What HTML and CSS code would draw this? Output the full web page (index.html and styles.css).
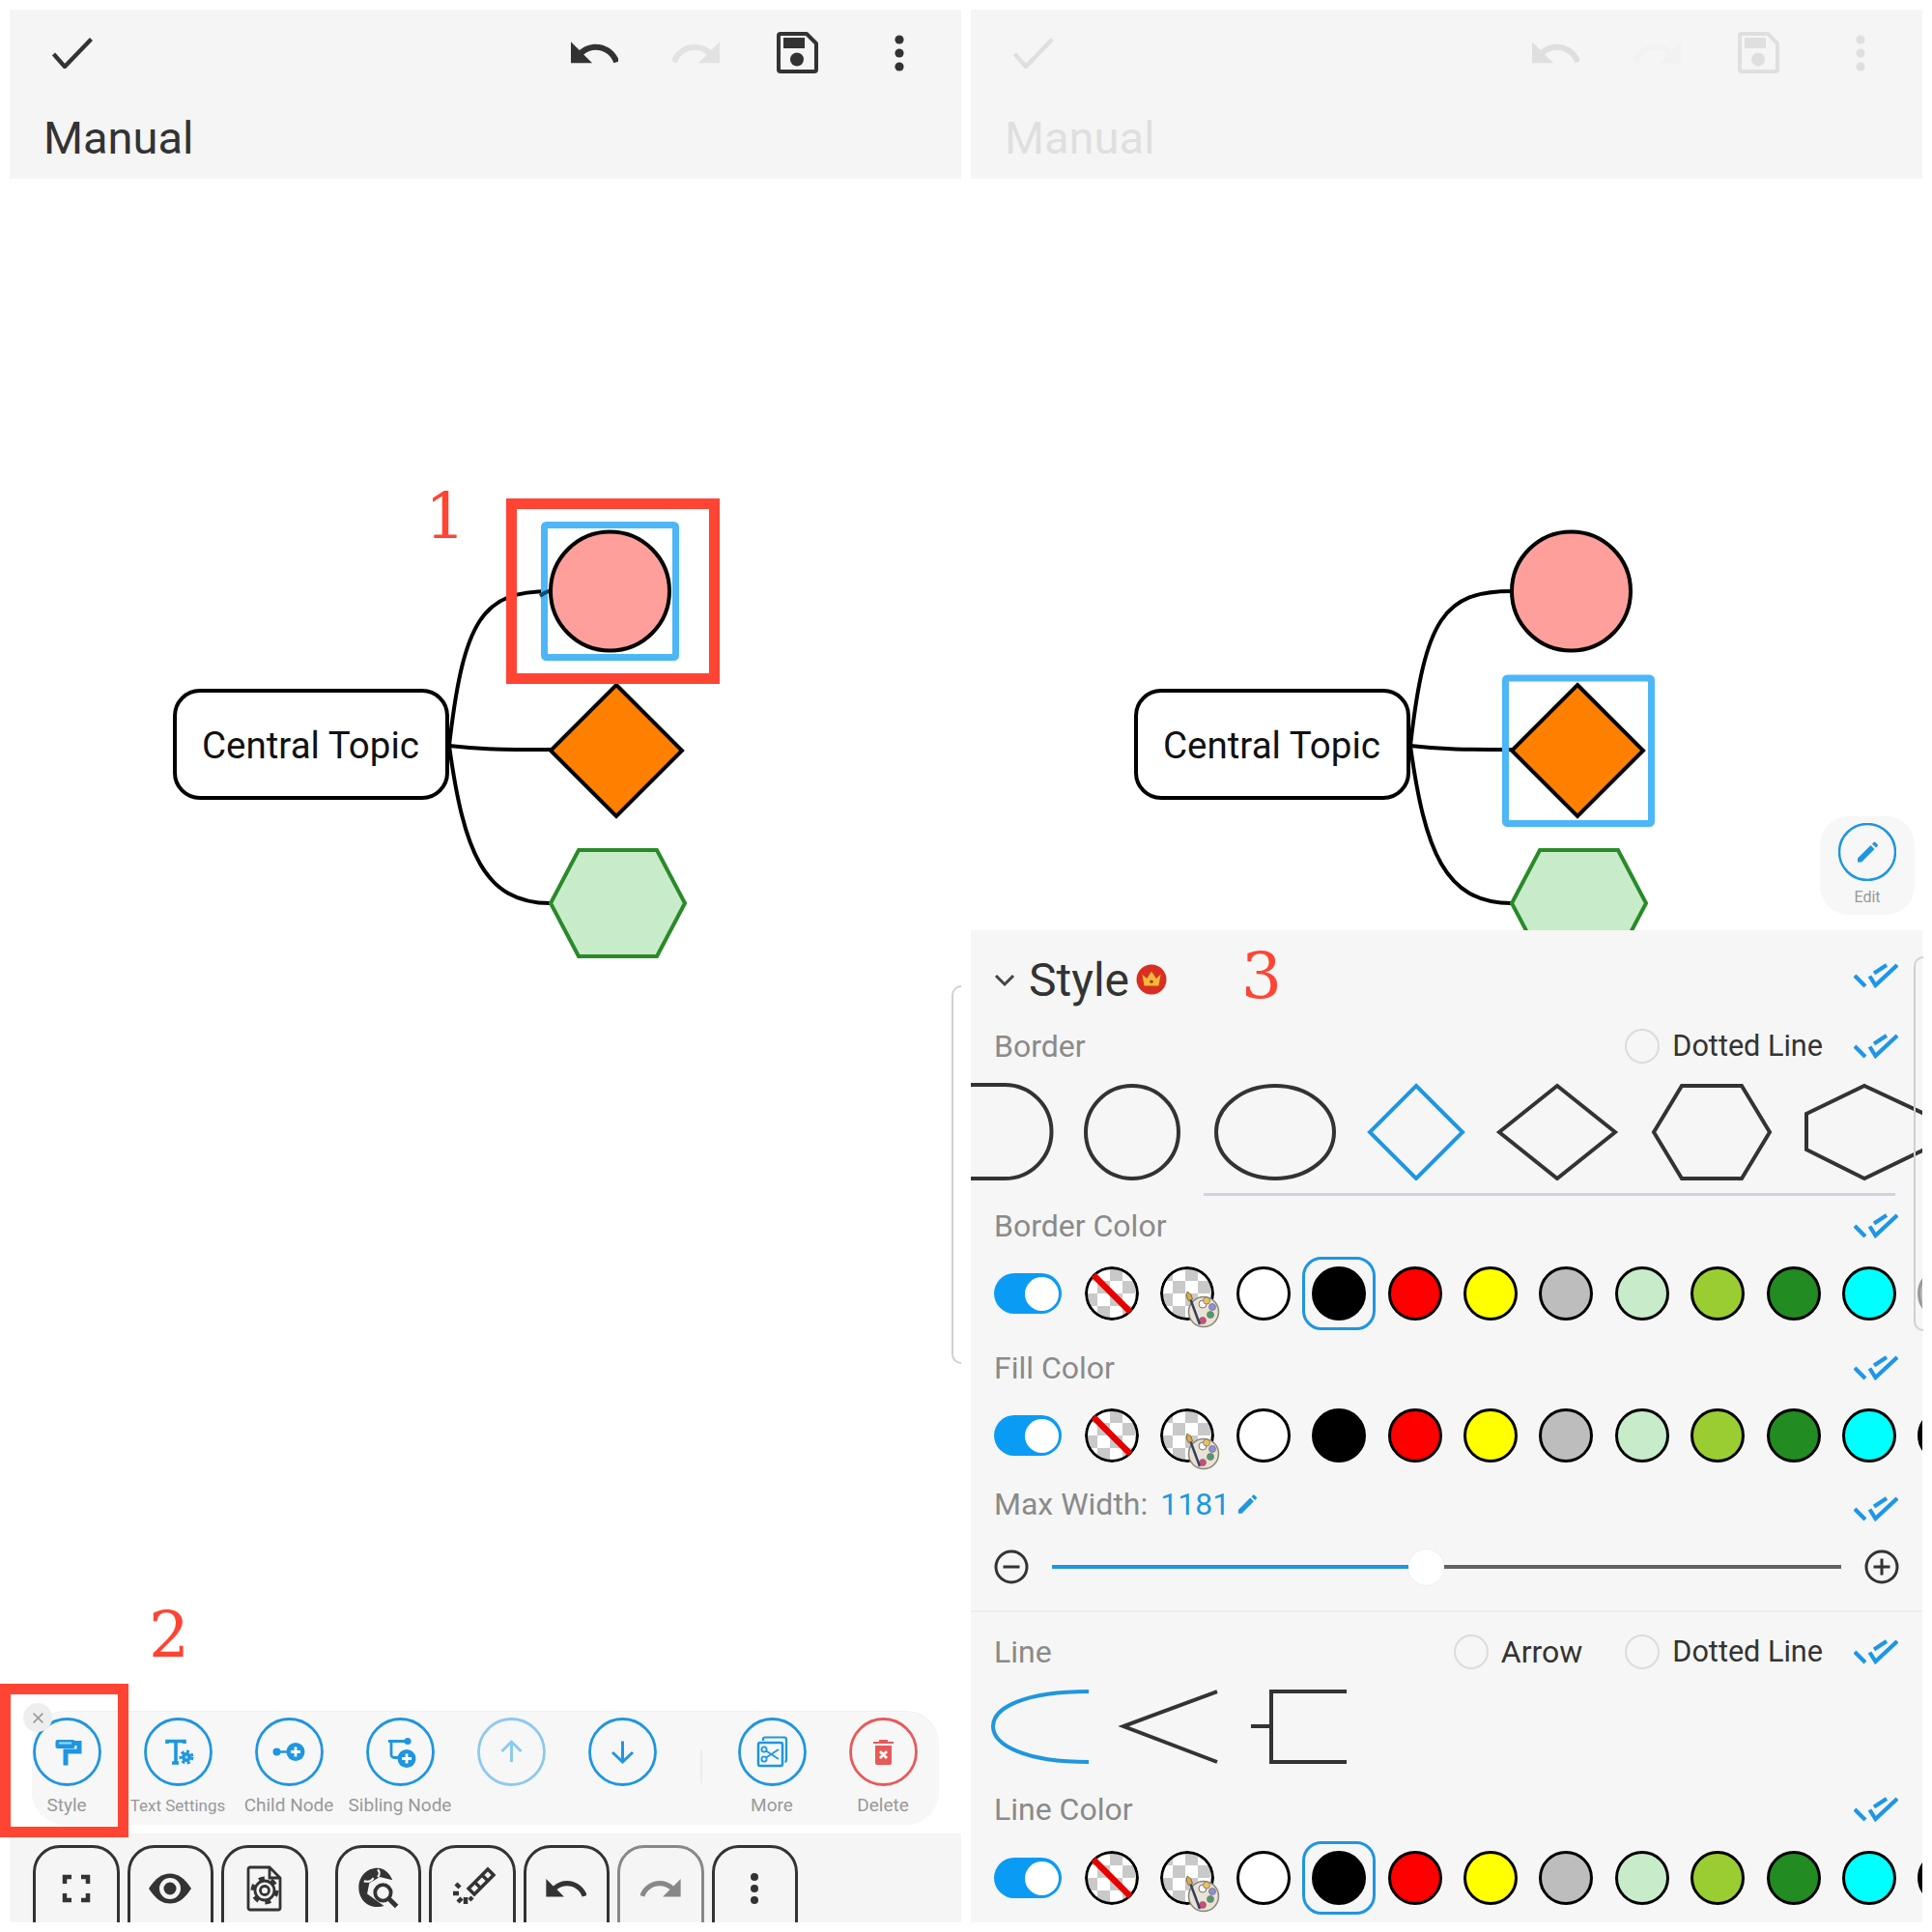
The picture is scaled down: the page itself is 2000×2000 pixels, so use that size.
FILE: index.html
```html
<!DOCTYPE html>
<html lang="en">
<head>
<meta charset="utf-8">
<title>Manual</title>
<link rel="stylesheet" href="styles.css">
</head>
<body>
<svg class="defs" width="0" height="0" aria-hidden="true">
  <defs>
    <pattern id="checker" width="26" height="26" patternUnits="userSpaceOnUse" x="0" y="2">
      <rect width="26" height="26" fill="#fff"/>
      <rect width="13" height="13" fill="#c9c9c9"/>
      <rect x="13" y="13" width="13" height="13" fill="#c9c9c9"/>
    </pattern>
    <symbol id="ic-undo" viewBox="2 7 20 9.2"><path fill="currentColor" d="M12.5 8c-2.65 0-5.05.99-6.9 2.6L2 7v9h9l-3.62-3.62c1.39-1.16 3.16-1.88 5.12-1.88 3.54 0 6.55 2.31 7.6 5.5l2.37-.78C21.08 11.03 17.15 8 12.5 8z"/></symbol>
    <symbol id="ic-redo" viewBox="2 7 20 9.2"><path fill="currentColor" d="M18.4 10.6C16.55 8.99 14.15 8 11.5 8c-4.65 0-8.58 3.03-9.96 7.22L3.9 16c1.05-3.19 4.05-5.5 7.6-5.5 1.95 0 3.73.72 5.12 1.88L13 16h9V7l-3.6 3.6z"/></symbol>
    <symbol id="ic-check" viewBox="0 0 42 32"><path fill="none" stroke="currentColor" stroke-width="4.400" d="M1.500 17 13 30 40.500 1.500"/></symbol>
    <symbol id="ic-save" viewBox="0 0 43 43">
      <path fill="none" stroke="currentColor" stroke-width="4" stroke-linejoin="round" d="M4 2h27l10 10v27a2 2 0 0 1-2 2H4a2 2 0 0 1-2-2V4a2 2 0 0 1 2-2z"/>
      <rect x="7" y="6" width="22" height="11" fill="currentColor"/>
      <circle cx="21" cy="28.500" r="7" fill="currentColor"/>
    </symbol>
    <symbol id="ic-more" viewBox="0 0 10 40">
      <circle cx="5" cy="6" r="4.600" fill="currentColor"/><circle cx="5" cy="20" r="4.600" fill="currentColor"/><circle cx="5" cy="34" r="4.600" fill="currentColor"/>
    </symbol>
    <symbol id="ic-double" viewBox="0 0 46 26">
      <path fill="none" stroke="currentColor" stroke-width="4.200" d="M1 13 12 24M16.500 13.500 22.500 23 45 2M21 10.500 34 2"/>
    </symbol>
    <symbol id="ic-pencil" viewBox="0 0 24 24">
      <path fill="currentColor" d="M2 18.500 15.500 5l4 4L6 22.500H2.500a.5.500 0 0 1-.5-.5zM17 3.500l1.500-1.500a1.400 1.400 0 0 1 2 0l2 2a1.400 1.400 0 0 1 0 2L21 7.500z"/>
    </symbol>
    <symbol id="ic-palette" viewBox="0 0 36 40">
      <ellipse cx="19" cy="23" rx="15.500" ry="15.500" fill="#e9e2d5" stroke="#8a8578" stroke-width="1.500"/>
      <circle cx="18" cy="15" r="4" fill="#fff" stroke="#777" stroke-width="1"/>
      <circle cx="22" cy="11.500" r="3.500" fill="#ecc15a" stroke="#777" stroke-width=".8"/>
      <circle cx="28" cy="18" r="3.500" fill="#8f8fd8" stroke="#777" stroke-width=".8"/>
      <circle cx="26" cy="26" r="3.500" fill="#4f9a6c" stroke="#777" stroke-width=".8"/>
      <circle cx="18" cy="32" r="3.500" fill="#d6487a" stroke="#777" stroke-width=".8"/>
      <path fill="none" stroke="#34405e" stroke-width="2.500" d="M5 9 15 36"/>
      <path fill="#d6a94f" stroke="#6b5a32" stroke-width=".8" d="M2 2 6 5 7.500 10 3.500 11.500 1 7z"/>
    </symbol>
  </defs>
</svg>

<div class="page">
  <section class="phone">
    <header class="app-head">
      <div class="head-row">
        <svg class="hi hi-check"><use href="#ic-check"/></svg>
        <span class="spring"></span>
        <svg class="hi hi-undo"><use href="#ic-undo"/></svg>
        <svg class="hi hi-redo dim"><use href="#ic-redo"/></svg>
        <svg class="hi hi-save"><use href="#ic-save"/></svg>
        <svg class="hi hi-more"><use href="#ic-more"/></svg>
      </div>
      <h1 class="head-title">Manual</h1>
    </header>

    <div class="canvas">
      <svg class="diagram" viewBox="10 185 985 1587" width="985" height="1587">
        <g class="links">
          <path d="M465 772C480 640 500 612 570 612"/>
          <path d="M465 772C500 776 520 776 570 776"/>
          <path d="M465 772C480 880 500 935 570 935"/>
        </g>
        <rect class="sel" x="563.500" y="543.500" width="136" height="137" rx="2"/>
        <path class="connect-over" d="M559 617C562 615 565 612 570 612"/>
        <ellipse class="n-circle" cx="631.500" cy="612" rx="61.500" ry="61.500"/>
        <polygon class="n-diamond" points="638,709 706,777 638,845 570,777"/>
        <polygon class="n-hex" points="599,880 680,880 709,935 680,990 599,990 570,935"/>
        <rect class="n-root" x="181" y="715" width="282" height="111" rx="26"/>
        <text class="n-text" x="321.500" y="785">Central Topic</text>
      </svg>
    </div>

    <div class="strip">
      <div class="act"><svg class="act-ic"><circle class="ring" cx="35.500" cy="35.500" r="34"/>
        <path class="blue-fill" d="M23.500 25a2 2 0 0 1 2-2h16a2 2 0 0 1 2 2v5a2 2 0 0 1-2 2h-16a2 2 0 0 1-2-2z"/>
        <path class="blue-line" d="M43 26.500h5v8.500H34v14.500" stroke-width="5"/>
        <path class="pale" d="M27 25.500h13v2H27z"/></svg><span class="act-label">Style</span></div>
      <div class="act"><svg class="act-ic"><circle class="ring" cx="35.500" cy="35.500" r="34"/>
        <path class="blue-line" d="M24 27v-2.500h18V27M33 24.500V47M29 47h7" stroke-width="3.600"/>
        <circle class="gear" cx="44" cy="41" r="6"/><circle class="blue-fill" cx="44" cy="41" r="5"/><circle class="pale" cx="44" cy="41" r="1.600"/></svg><span class="act-label small">Text Settings</span></div>
      <div class="act"><svg class="act-ic"><circle class="ring" cx="35.500" cy="35.500" r="34"/>
        <circle class="blue-fill" cx="22.500" cy="35.500" r="4"/><path class="blue-line" d="M22 35.500h14" stroke-width="2.500"/>
        <circle class="blue-fill" cx="42" cy="35.500" r="9.500"/><path class="plus" d="M42 30.500v10M37 35.500h10"/></svg><span class="act-label">Child Node</span></div>
      <div class="act"><svg class="act-ic"><circle class="ring" cx="35.500" cy="35.500" r="34"/>
        <path class="blue-line" d="M23 24.500h20M26 24.500v14a3 3 0 0 0 3 3h6" stroke-width="2.800"/><circle class="blue-fill" cx="43" cy="24.500" r="3.600"/>
        <circle class="blue-fill" cx="42" cy="42.500" r="9.500"/><path class="plus" d="M42 37.500v10M37 42.500h10"/></svg><span class="act-label">Sibling Node</span></div>
      <div class="act act-off"><svg class="act-ic"><circle class="ring" cx="35.500" cy="35.500" r="34"/>
        <path class="blue-line" d="M35.500 46V25M25.500 35l10-10 10 10" stroke-width="3"/></svg></div>
      <div class="act"><svg class="act-ic"><circle class="ring" cx="35.500" cy="35.500" r="34"/>
        <path class="blue-line" d="M35.500 24.500V46M25 36l10.500 10L46 36" stroke-width="3"/></svg></div>
      <span class="strip-sep"></span>
      <div class="act"><svg class="act-ic"><circle class="ring" cx="35.500" cy="35.500" r="34"/>
        <path class="blue-line" d="M26 24v-1.500a2 2 0 0 1 2-2h20a2 2 0 0 1 2 2V44a2 2 0 0 1-1.500 2" stroke-width="2.200"/>
        <rect class="blue-line" x="21" y="26" width="25" height="24" rx="2" stroke-width="2.500"/>
        <circle class="blue-line" cx="27" cy="33" r="2.600" stroke-width="1.800"/><circle class="blue-line" cx="27" cy="43" r="2.600" stroke-width="1.800"/>
        <path class="blue-line" d="M29 34.500 42 43M29 41.500 42 33" stroke-width="1.800"/></svg><span class="act-label">More</span></div>
      <div class="act act-red"><svg class="act-ic"><circle class="ring" cx="35.500" cy="35.500" r="34"/>
        <path class="blue-fill" d="M27 29h17v18a2 2 0 0 1-2 2H29a2 2 0 0 1-2-2zM25 25h21v2H25zM31 23h9v2h-9z"/>
        <path class="plus" d="M32 35l7 7M39 35l-7 7"/></svg><span class="act-label">Delete</span></div>
    </div>

    <nav class="bottom-bar">
      <div class="tool"><svg class="ti" viewBox="0 0 48 48"><path class="ti-line" d="M12 19v-7h7M29 12h7v7M36 29v7h-7M19 36h-7v-7"/></svg></div>
      <div class="tool"><svg class="ti" viewBox="0 0 48 48"><path class="ti-fill" d="M2 24C9 13 16 8.500 24 8.500S39 13 46 24C39 35 32 39.500 24 39.500S9 35 2 24z"/><circle class="ti-hole" cx="24" cy="24" r="11"/><circle class="ti-fill" cx="24" cy="24" r="6.500"/></svg></div>
      <div class="tool"><svg class="ti" viewBox="0 0 48 48"><path class="ti-thin" d="M9 2h20l11 11v31a2 2 0 0 1-2 2H9a2 2 0 0 1-2-2V4a2 2 0 0 1 2-2zM29 2v11h11"/><circle class="ti-thin" cx="24" cy="26" r="4.500"/><circle class="ti-thin" cx="24" cy="26" r="10"/><circle class="ti-teeth" cx="24" cy="26" r="12.500"/></svg></div>
      <div class="tool tool-gap"><svg class="ti" viewBox="2 2 44 44"><path class="ti-fill" d="M24 4.500C13 4.500 6 13 6 23s7 18.500 18 18.500c2 0 4-.3 6-1L14 29l2-10 10-6 12 3C35 9 30 4.500 24 4.500z"/><path class="ti-hole-line" d="M11 17c4 1 7 0 9-3M24 6c2 2 2 5 0 7"/><circle class="ti-thin-b" cx="29" cy="28" r="7.500"/><path class="ti-thick" d="M35 34l7 7"/></svg></div>
      <div class="tool"><svg class="ti" viewBox="0 0 48 48"><path class="ti-thin ti-bold" d="M40 4l6 6-20 20-6-6zM34 10l6 6M26 17l6 6"/><path class="ti-thick" d="M4 29h6M7 19l4 4M17 33v7M9 38l4-4M24 36l-3-3"/></svg></div>
      <div class="tool"><svg class="ti-wide"><use href="#ic-undo"/></svg></div>
      <div class="tool tool-off"><svg class="ti-wide"><use href="#ic-redo"/></svg></div>
      <div class="tool"><svg class="ti" viewBox="0 0 48 48"><circle class="ti-fill" cx="24" cy="12" r="4"/><circle class="ti-fill" cx="24" cy="24" r="4"/><circle class="ti-fill" cx="24" cy="36" r="4"/></svg></div>
    </nav>
  </section>

  <section class="phone">
    <header class="app-head">
      <div class="head-row faded">
        <svg class="hi hi-check"><use href="#ic-check"/></svg>
        <span class="spring"></span>
        <svg class="hi hi-undo"><use href="#ic-undo"/></svg>
        <svg class="hi hi-redo dim"><use href="#ic-redo"/></svg>
        <svg class="hi hi-save"><use href="#ic-save"/></svg>
        <svg class="hi hi-more"><use href="#ic-more"/></svg>
      </div>
      <h2 class="head-title faded">Manual</h2>
    </header>

    <div class="canvas">
      <svg class="diagram" viewBox="1005 185 985 778" width="985" height="778">
        <g class="links">
          <path d="M1460 772C1475 640 1495 612 1565 612"/>
          <path d="M1460 772C1495 776 1515 776 1565 776"/>
          <path d="M1460 772C1475 880 1495 935 1565 935"/>
        </g>
        <ellipse class="n-circle" cx="1626.500" cy="612" rx="61.500" ry="61.500"/>
        <rect class="sel" x="1558.500" y="702" width="151" height="150.500" rx="2"/>
        <polygon class="n-diamond" points="1633,709 1701,777 1633,845 1565,777"/>
        <polygon class="n-hex" points="1594,880 1675,880 1704,935 1675,990 1594,990 1565,935"/>
        <rect class="n-root" x="1176" y="715" width="282" height="111" rx="26"/>
        <text class="n-text" x="1316.500" y="785">Central Topic</text>
      </svg>
      <div class="edit-chip">
        <svg class="edit-ring" viewBox="0 0 60 60"><circle class="ring" cx="30" cy="30" r="29"/><use href="#ic-pencil" x="18" y="18" width="24" height="24" class="blue-ink"/></svg>
        <span class="edit-label">Edit</span>
      </div>
    </div>

    <div class="panel">
      <div class="row row-title">
        <svg class="chev" viewBox="0 0 22 14"><path d="M2 2l9 9 9-9"/></svg>
        <span class="panel-title">Style</span>
        <svg class="crown" viewBox="0 0 30 30"><circle cx="15" cy="15" r="14.500" fill="#d92f22"/><path fill="#f4b93b" d="M6 10l4.500 4L15 7l4.500 7L24 10l-2 11H8z"/><circle cx="15" cy="17" r="1.600" fill="#b5281c"/></svg>
        <span class="spring"></span>
        <svg class="dbl dbl-up"><use href="#ic-double"/></svg>
      </div>

      <div class="row row-label">
        <span class="label">Border</span>
        <span class="spring"></span>
        <span class="radio"></span><span class="opt">Dotted Line</span>
        <svg class="dbl"><use href="#ic-double"/></svg>
      </div>

      <svg class="shapes" viewBox="1005 1121 985 101" width="985" height="101">
        <path d="M1000 1123h40a48 48 0 0 1 0 97h-40"/>
        <circle cx="1172" cy="1172" r="48"/>
        <ellipse cx="1320" cy="1172" rx="61" ry="48"/>
        <polygon class="on" points="1466,1124 1514,1172 1466,1220 1418,1172"/>
        <polygon points="1612,1124 1672,1172 1612,1220 1552,1172"/>
        <polygon points="1741,1124 1803,1124 1832,1172 1803,1220 1741,1220 1712,1172"/>
        <polygon points="1930,1124 1992,1153 1992,1190 1930,1220 1870,1190 1870,1153"/>
      </svg>
      <div class="scrollbar"></div>

      <div class="row row-label row-bc">
        <span class="label">Border Color</span>
        <span class="spring"></span>
        <svg class="dbl"><use href="#ic-double"/></svg>
      </div>
      <div class="swatches">
        <span class="toggle"><i></i></span>
        <svg class="sw" viewBox="0 0 56 56"><circle cx="28" cy="28" r="26.500" fill="url(#checker)" stroke="#000" stroke-width="3"/><path stroke="#e60000" stroke-width="6.500" d="M9 9l38 38"/></svg>
        <span class="sw-wrap"><svg class="sw" viewBox="0 0 56 56"><circle cx="28" cy="28" r="26.500" fill="url(#checker)" stroke="#000" stroke-width="3"/></svg><svg class="palette"><use href="#ic-palette"/></svg></span>
        <span class="sw c-white"></span>
        <span class="sw-picked"><span class="sw c-black"></span></span>
        <span class="sw c-red"></span><span class="sw c-yellow"></span><span class="sw c-gray"></span><span class="sw c-mint"></span><span class="sw c-lime"></span><span class="sw c-green"></span><span class="sw c-cyan"></span><span class="sw c-silver"></span>
      </div>

      <div class="row row-label row-fc">
        <span class="label">Fill Color</span>
        <span class="spring"></span>
        <svg class="dbl"><use href="#ic-double"/></svg>
      </div>
      <div class="swatches">
        <span class="toggle"><i></i></span>
        <svg class="sw" viewBox="0 0 56 56"><circle cx="28" cy="28" r="26.500" fill="url(#checker)" stroke="#000" stroke-width="3"/><path stroke="#e60000" stroke-width="6.500" d="M9 9l38 38"/></svg>
        <span class="sw-wrap"><svg class="sw" viewBox="0 0 56 56"><circle cx="28" cy="28" r="26.500" fill="url(#checker)" stroke="#000" stroke-width="3"/></svg><svg class="palette"><use href="#ic-palette"/></svg></span>
        <span class="sw c-white"></span>
        <span class="sw-picked off"><span class="sw c-black"></span></span>
        <span class="sw c-red"></span><span class="sw c-yellow"></span><span class="sw c-gray"></span><span class="sw c-mint"></span><span class="sw c-lime"></span><span class="sw c-green"></span><span class="sw c-cyan"></span><span class="sw c-black"></span>
      </div>

      <div class="row row-label row-mw">
        <span class="label">Max Width:</span>
        <span class="mw-value">1181</span>
        <svg class="mw-pen blue-ink"><use href="#ic-pencil"/></svg>
        <span class="spring"></span>
        <svg class="dbl dbl-down"><use href="#ic-double"/></svg>
      </div>
      <div class="slider">
        <svg class="step" viewBox="0 0 36 36"><circle cx="18" cy="18" r="16"/><path d="M9.500 18h17"/></svg>
        <span class="track-on"></span><span class="thumb"></span><span class="track-off"></span>
        <svg class="step" viewBox="0 0 36 36"><circle cx="18" cy="18" r="16"/><path d="M9.500 18h17M18 9.500v17"/></svg>
      </div>
      <div class="rule"></div>

      <div class="row row-label row-line">
        <span class="label">Line</span>
        <span class="spring"></span>
        <span class="radio"></span><span class="opt opt-arrow">Arrow</span>
        <span class="radio"></span><span class="opt">Dotted Line</span>
        <svg class="dbl"><use href="#ic-double"/></svg>
      </div>
      <svg class="lines" viewBox="1005 1749 985 78" width="985" height="78">
        <path class="on" d="M1127 1751C1060 1751 1028 1768 1028 1787S1060 1824 1127 1824"/>
        <path d="M1260 1751 1163 1787 1260 1824"/>
        <path d="M1394 1751H1316V1824H1394M1295 1787H1316"/>
      </svg>

      <div class="row row-label row-lc">
        <span class="label">Line Color</span>
        <span class="spring"></span>
        <svg class="dbl"><use href="#ic-double"/></svg>
      </div>
      <div class="swatches swatches-last">
        <span class="toggle"><i></i></span>
        <svg class="sw" viewBox="0 0 56 56"><circle cx="28" cy="28" r="26.500" fill="url(#checker)" stroke="#000" stroke-width="3"/><path stroke="#e60000" stroke-width="6.500" d="M9 9l38 38"/></svg>
        <span class="sw-wrap"><svg class="sw" viewBox="0 0 56 56"><circle cx="28" cy="28" r="26.500" fill="url(#checker)" stroke="#000" stroke-width="3"/></svg><svg class="palette"><use href="#ic-palette"/></svg></span>
        <span class="sw c-white"></span>
        <span class="sw-picked"><span class="sw c-black"></span></span>
        <span class="sw c-red"></span><span class="sw c-yellow"></span><span class="sw c-gray"></span><span class="sw c-mint"></span><span class="sw c-lime"></span><span class="sw c-green"></span><span class="sw c-cyan"></span><span class="sw c-black"></span>
      </div>
    </div>
  </section>

  <div class="mark mark-1"></div>
  <div class="mark mark-2"></div>
  <div class="ghost ghost-l"></div>
  <div class="ghost ghost-r"></div>
  <button class="close-x" type="button"><svg viewBox="0 0 16 16"><path d="M2 2l12 12M14 2 2 14"/></svg></button>
  <span class="num num-1">1</span>
  <span class="num num-2">2</span>
  <span class="num num-3">3</span>
</div>
</body>
</html>
```

FILE: styles.css
```css
* { box-sizing: border-box; }
html, body { margin: 0; padding: 0; background: #fff; }
body { font-family: Roboto, "Liberation Sans", sans-serif; color: #333; }
.defs { position: absolute; }
.page { position: relative; display: flex; gap: 10px; width: 2000px; height: 2000px; padding: 10px; overflow: hidden; }
.phone { display: flex; flex-direction: column; width: 985px; height: 1980px; overflow: hidden; }
.spring { flex: 1; }

/* header */
.app-head { flex: none; height: 175px; background: #f5f5f5; }
.head-row { display: flex; align-items: center; height: 89px; padding-left: 44px; color: #333; }
.head-title { margin: 0; padding: 17px 0 0 35px; font-size: 47px; line-height: 54px; font-weight: 400; color: #333; }
.faded { opacity: .11; }
.hi { display: block; flex: none; }
.hi-check { width: 42px; height: 32px; }
.hi-undo, .hi-redo { width: 49px; height: 23px; }
.hi-redo { margin-left: 56px; }
.dim { color: #e2e2e2; }
.hi-save { width: 43px; height: 43px; margin-left: 59px; }
.hi-more { width: 10px; height: 40px; margin-left: 79px; margin-right: 59px; }

/* canvas */
.canvas { position: relative; flex: 1; min-height: 0; overflow: hidden; background: #fff; }
.diagram { display: block; }
.links path { fill: none; stroke: #000; stroke-width: 4; }
.sel { fill: none; stroke: #4db6f7; stroke-width: 7; }
.connect-over { fill: none; stroke: #0b4a70; stroke-width: 4; }
.n-circle { fill: #ff9f9c; stroke: #000; stroke-width: 4; }
.n-diamond { fill: #ff8000; stroke: #000; stroke-width: 4; stroke-linejoin: miter; }
.n-hex { fill: #c8ecca; stroke: #2a8a2a; stroke-width: 4; }
.n-root { fill: #fff; stroke: #000; stroke-width: 4; }
.n-text { font-family: Roboto, sans-serif; font-size: 38.500px; text-anchor: middle; fill: #111; }

/* edit chip */
.edit-chip { position: absolute; left: 879px; top: 660px; display: flex; flex-direction: column; align-items: center; width: 98px; height: 102px; padding-top: 7px; border-radius: 30px; background: #f7f7f7; }
.edit-ring { display: block; width: 60px; height: 60px; }
.edit-ring .ring { fill: none; stroke: #1e96e0; stroke-width: 2.500; }
.blue-ink { color: #1e96e0; }
.edit-label { margin-top: 8px; font-size: 16px; line-height: 18px; color: #999; }

/* action strip */
.strip { position: relative; flex: none; display: flex; gap: 41px; width: 939px; height: 117px; margin: 0 0 9px 23px; padding-top: 6px; border-radius: 34px; background: #f7f7f7; box-shadow: 0 -1px 0 #efefef; color: #1e96e0; }
.act { display: flex; flex-direction: column; align-items: center; flex: none; width: 74px; color: #1e96e0; }
.act:first-child { margin-left: -1px; }
.act-ic { display: block; width: 71px; height: 71px; flex: none; }
.ring { fill: none; stroke: currentColor; stroke-width: 2.800; }
.blue-fill { fill: currentColor; }
.blue-line { fill: none; stroke: currentColor; }
.pale { fill: #a8d8f5; }
.plus { fill: none; stroke: #fff; stroke-width: 2.800; }
.gear { fill: none; stroke: currentColor; stroke-width: 3; stroke-dasharray: 3 2.500; transform-box: fill-box; }
.act-label { margin-top: 8px; font-size: 19px; line-height: 24px; color: #999; white-space: nowrap; }
.act-label.small { font-size: 17px; }
.act-off { color: #8ccaf0; }
.act-red { color: #e85a5a; }
.strip-sep { flex: none; width: 2px; height: 34px; margin: 34px -6px 0 3px; background: #ececec; }

/* bottom toolbar */
.bottom-bar { flex: none; display: flex; gap: 8px; height: 92px; padding: 12px 0 0 24px; background: #f5f5f5; overflow: hidden; }
.tool { flex: none; display: flex; justify-content: center; align-items: flex-start; width: 89.500px; height: 110px; padding-top: 18px; border: 3px solid #333; border-radius: 28px; color: #333; }
.tool-gap { margin-left: 20px; }
.tool-off { border-color: #888; color: #888; }
.ti { display: block; width: 48px; height: 48px; }
.ti-wide { display: block; width: 42px; height: 19px; margin-top: 14px; }
.ti-line { fill: none; stroke: #333; stroke-width: 4.500; }
.ti-fill { fill: #333; }
.ti-hole { fill: #f5f5f5; }
.ti-thin { fill: none; stroke: #333; stroke-width: 2.800; }
.ti-bold { stroke-width: 3.400; }
.ti-teeth { fill: none; stroke: #333; stroke-width: 4; stroke-dasharray: 6 7.100; }
.ti-hole-line { fill: none; stroke: #f5f5f5; stroke-width: 2; }
.ti-thin-b { fill: #f5f5f5; stroke: #333; stroke-width: 3.500; }
.ti-thick { fill: none; stroke: #333; stroke-width: 4.500; }

/* style panel */
.panel { flex: none; display: flex; flex-direction: column; height: 1027px; background: #f6f6f6; box-shadow: 0 -1px 0 #efefef; overflow: hidden; }
.row { flex: none; display: flex; align-items: center; padding: 0 25px 0 24px; }
.row-title { height: 104px; }
.chev { width: 22px; height: 14px; margin-right: 14px; margin-left: 0; }
.chev path { fill: none; stroke: #444; stroke-width: 3; }
.panel-title { font-size: 48px; line-height: 56px; color: #333; }
.crown { width: 32px; height: 32px; margin-left: 7px; margin-top: -2px; }
.dbl { display: block; flex: none; width: 46px; height: 26px; color: #1e96e8; }
.dbl-up { margin-top: -10px; }
.dbl-down { margin-top: 10px; }
.row-label { height: 32px; font-size: 32px; line-height: 32px; }
.label { color: #8a8a8a; }
.radio { flex: none; width: 36px; height: 36px; border: 2px solid #dcdcdc; border-radius: 50%; }
.opt { margin: 0 32px 0 13px; font-size: 30.600px; color: #333; }
.opt-arrow { margin-right: 44px; font-size: 32px; }
.shapes { flex: none; display: block; margin-top: 22px; }
.shapes > *, .lines path { fill: none; stroke: #333; stroke-width: 4; }
.shapes .on, .lines .on { stroke: #1e96e0; }
.scrollbar { flex: none; width: 716px; height: 3px; margin: 13px 0 0 241px; background: #d3d1e6; }
.row-bc { margin-top: 15px; }
.row-fc { margin-top: 23px; }
.row-mw { margin-top: 17px; }
.row-line { margin-top: 25px; }
.row-lc { margin-top: 30px; }

.swatches { flex: none; display: flex; align-items: center; gap: 22.400px; width: 1020px; height: 76px; margin-top: 16px; padding-left: 24px; }
.swatches-last { margin-top: 17px; }
.toggle { flex: none; display: flex; align-items: center; justify-content: flex-end; width: 70px; height: 42px; margin-right: 1.600px; padding-right: 3px; border-radius: 21px; background: #0a9bf5; }
.toggle i { display: block; width: 35px; height: 35px; border-radius: 50%; background: #fff; }
.sw { display: block; flex: none; width: 56px; height: 56px; border: 3px solid #000; border-radius: 50%; }
svg.sw { border: 0; }
.sw-wrap { position: relative; flex: none; width: 56px; height: 56px; }
.palette { position: absolute; left: 26px; top: 24px; width: 36px; height: 40px; }
.sw-picked { flex: none; display: flex; align-items: center; justify-content: center; width: 76px; height: 76px; margin: 0 -10px; border: 3px solid #1e96e0; border-radius: 20px; }
.sw-picked.off { border-color: transparent; }
.c-white { background: #fff; }
.c-black { background: #000; }
.c-red { background: #ff0000; }
.c-yellow { background: #ffff00; }
.c-gray { background: #bdbdbd; }
.c-silver { background: #bdbdbd; border-color: #999; }
.c-mint { background: #c8ecca; }
.c-lime { background: #9acd32; }
.c-green { background: #228b22; }
.c-cyan { background: #00ffff; }

.mw-value { margin-left: 13px; color: #1e96e0; }
.mw-pen { width: 22px; height: 22px; margin-left: 7px; }
.slider { flex: none; display: flex; align-items: center; height: 48px; margin-top: 25px; padding: 0 24px; }
.step { flex: none; width: 36px; height: 36px; }
.step circle, .step path { fill: none; stroke: #333; stroke-width: 3; }
.track-on { flex: none; width: 369px; height: 4px; margin-left: 24px; background: #1e96e0; }
.thumb { flex: none; width: 37px; height: 37px; border-radius: 50%; background: #fff; box-shadow: 0 0 2px rgba(0,0,0,.08); }
.track-off { flex: 1; height: 4px; margin-right: 24px; background: #5f6368; }
.rule { flex: none; height: 2px; margin-top: 21px; background: #eeeeee; }
.lines { flex: none; display: block; margin-top: 23px; }

/* annotations over the screenshots */
.mark { position: absolute; border: 11px solid #ff4433; }
.mark-1 { left: 524px; top: 516px; width: 221px; height: 192px; }
.mark-2 { left: 0; top: 1743px; width: 133px; height: 159px; }
.ghost { position: absolute; width: 10px; border: 2px solid #d0d0d0; border-right: 0; border-radius: 18px 0 0 18px; }
.ghost-l { left: 985px; top: 1020px; height: 392px; }
.ghost-r { left: 1981px; top: 990px; height: 388px; }
.close-x { position: absolute; left: 24px; top: 1763px; display: flex; align-items: center; justify-content: center; width: 30px; height: 30px; padding: 0; border: 0; border-radius: 50%; background: #eeeeee; }
.close-x svg { width: 13px; height: 13px; }
.close-x path { fill: none; stroke: #999; stroke-width: 2; }
.num { position: absolute; font-family: "DejaVu Serif", serif; font-size: 66px; line-height: 70px; color: #ff4433; }
.num-1 { left: 440px; top: 500px; }
.num-2 { left: 154px; top: 1658px; }
.num-3 { left: 1285px; top: 976px; }
```
